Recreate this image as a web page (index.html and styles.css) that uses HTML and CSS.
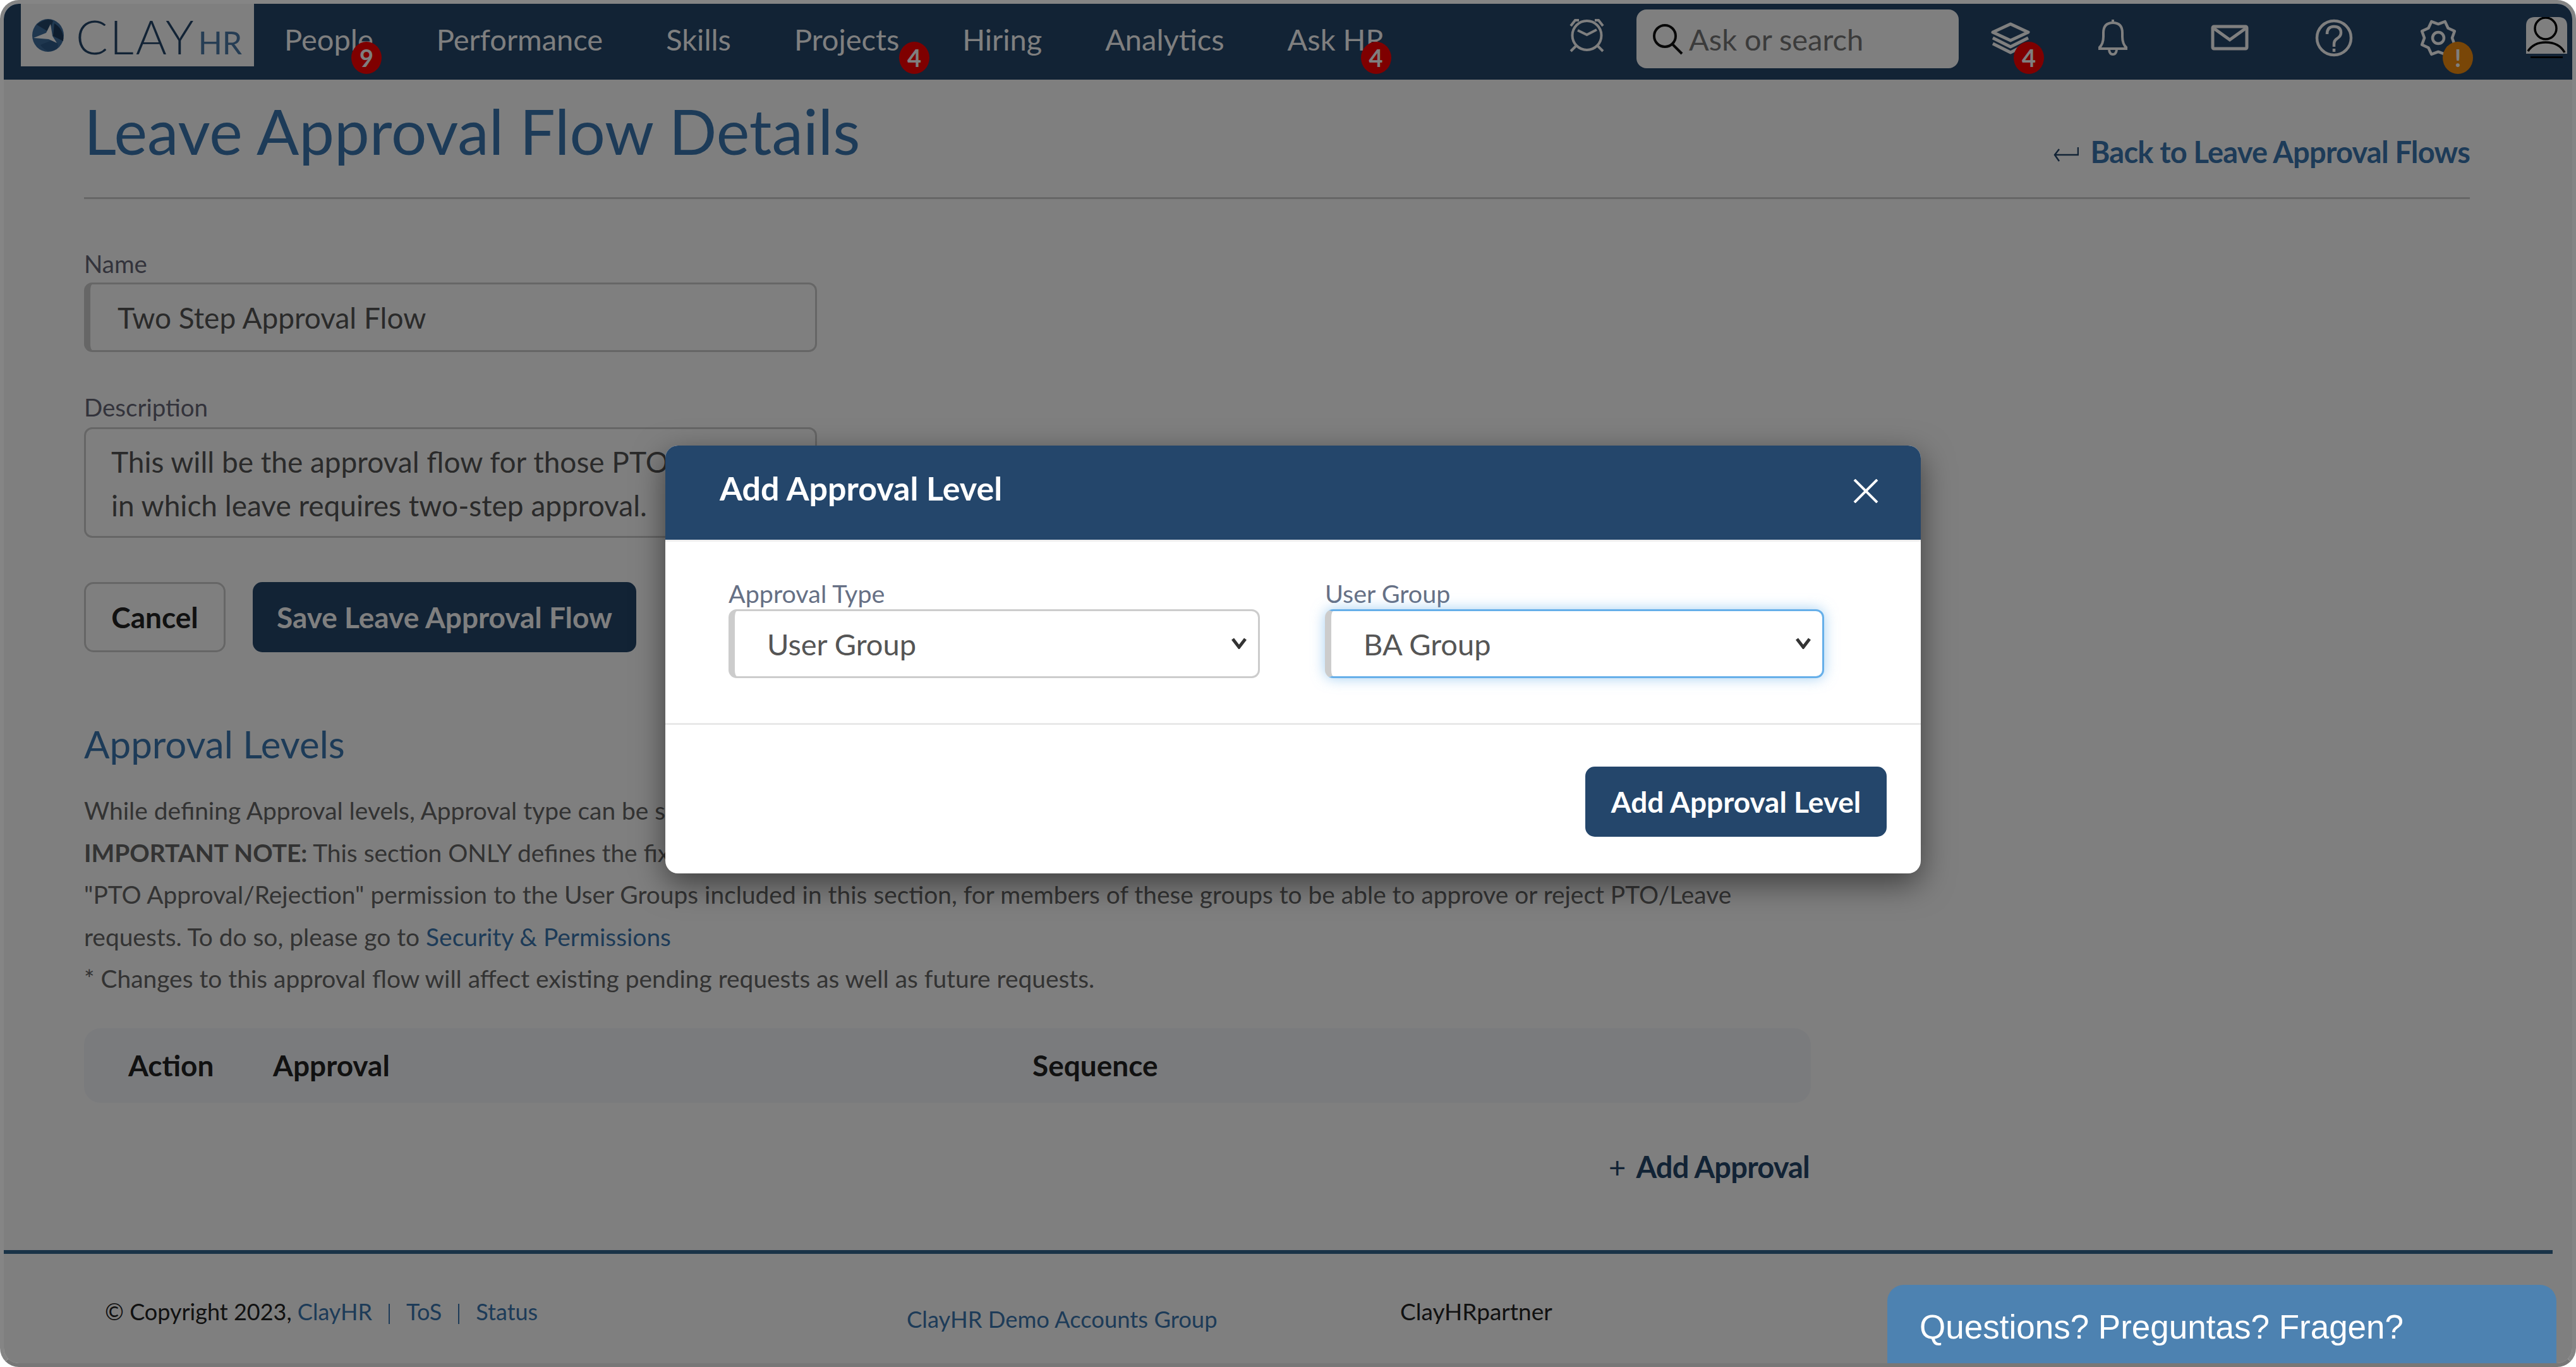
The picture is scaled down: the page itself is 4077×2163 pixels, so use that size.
FILE: index.html
```html
<!DOCTYPE html>
<html lang="en">
<head>
  <meta charset="UTF-8">
  <title>Leave Approval Flow Details</title>
  <link rel="stylesheet" href="styles.css">
</head>
<body>
<div class="window">

  <!-- Top bar -->
  <header class="topbar">
    <a class="logo">
      <svg class="logo-mark" viewBox="0 0 52 54">
        <ellipse cx="26" cy="27" rx="25" ry="26" fill="#3f6f9f"/>
        <path d="M8 10 Q24 -2 34 4 L28 22 Z" fill="#24466b"/>
        <path d="M36 8 Q52 18 50 36 L34 28 Z" fill="#1c3a5c"/>
        <path d="M14 42 L34 34 Q46 40 40 48 Q24 58 14 42 Z" fill="#2f5c8c"/>
        <path d="M30 9 L33 28 L40 39 L27 33 L3 31 L23 23 Z" fill="#fff"/>
      </svg>
      <span class="logo-clay">CLAY</span><span class="logo-hr">HR</span>
    </a>
    <nav class="nav">
      <a class="nav-item">People<span class="badge badge-people">9</span></a>
      <a class="nav-item">Performance</a>
      <a class="nav-item">Skills</a>
      <a class="nav-item">Projects<span class="badge badge-projects">4</span></a>
      <a class="nav-item">Hiring</a>
      <a class="nav-item">Analytics</a>
      <a class="nav-item">Ask HR<span class="badge badge-ask">4</span></a>
    </nav>
    <div class="tools">
      <svg class="icon-alarm" viewBox="0 0 57 54" fill="none" stroke="#fff" stroke-width="4">
        <circle cx="28.5" cy="27" r="23"/>
        <path d="M14 19 L28.500 26 L44 18"/>
        <path d="M3 12 L10 3 H16 M54 12 L47 3 H41 M3 52 L11 44 M54 52 L46 44"/>
      </svg>
      <div class="search">
        <svg class="search-icon" viewBox="0 0 50 50" fill="none" stroke="#111" stroke-width="4">
          <circle cx="20" cy="20" r="17"/>
          <path d="M32 33 L47 48"/>
        </svg>
        <span class="search-text">Ask or search</span>
      </div>
      <div class="tool tool-layers">
        <svg viewBox="0 0 64 64" fill="none" stroke="#fff" stroke-width="5" stroke-linejoin="round">
          <path d="M32 14 L60 27 L32 40 L4 27 Z"/>
          <path d="M4 36 L32 50 L60 36"/>
          <path d="M4 45 L32 59 L60 45"/>
        </svg>
        <span class="badge badge-layers">4</span>
      </div>
      <div class="tool tool-bell">
        <svg viewBox="0 0 60 60" fill="none" stroke="#fff" stroke-width="4" stroke-linejoin="round">
          <path d="M30 1 V6"/>
          <path d="M8 46 Q15 40 15 28 V22 Q15 6 30 6 Q45 6 45 22 V28 Q45 40 52 46"/>
          <path d="M7 47 H53"/>
          <path d="M24 49 Q25 56 30 56 Q35 56 36 49"/>
        </svg>
      </div>
      <div class="tool tool-mail">
        <svg viewBox="0 0 60 60" fill="none" stroke="#fff" stroke-width="5">
          <rect x="3" y="13" width="54" height="35" rx="2"/>
          <path d="M5 16 L30 34 L55 16"/>
        </svg>
      </div>
      <div class="tool">
        <svg viewBox="0 0 60 60" fill="none" stroke="#fff" stroke-width="4.500">
          <circle cx="30" cy="30" r="27"/>
          <path d="M19 24 Q19 12 30 12 Q41 12 41 22 Q41 27 35 31 Q30 34 30 40 V44"/>
          <path d="M30 47 V52"/>
        </svg>
      </div>
      <div class="tool">
        <svg viewBox="0 0 60 60" fill="none" stroke="#fff" stroke-width="4.500" stroke-linejoin="round">
          <g transform="rotate(22.5 30 30)">
            <path d="M58 30 L50.300 38.400 L49.800 49.800 L38.400 50.300 L30 58 L21.600 50.300 L10.200 49.800 L9.700 38.400 L2 30 L9.700 21.600 L10.200 10.200 L21.600 9.700 L30 2 L38.400 9.700 L49.800 10.200 L50.300 21.600 Z"/>
          </g>
          <circle cx="30" cy="30" r="9"/>
        </svg>
        <span class="badge badge-gear">!</span>
      </div>
      <div class="tool tool-user">
        <svg viewBox="0 0 65 65" stroke="#000" stroke-width="3.500">
          <path d="M14 0 H51 Q65 0 65 14 V58 H0 V14 Q0 0 14 0 Z" fill="#fff" stroke="none"/>
          <circle cx="31" cy="18" r="17" fill="#fff"/>
          <path d="M3 54 Q12 40 31 40 Q52 40 61 56 M7 64 H58" fill="none"/>
        </svg>
      </div>
    </div>
  </header>

  <!-- Page content -->
  <main class="content">
    <div class="title-bar">
      <h1 class="title">Leave Approval Flow Details</h1>
      <a class="back-link">
        <svg class="back-arrow" viewBox="0 0 40 26" fill="none" stroke="#24466b" stroke-width="2.500">
          <path d="M39 1 V13 H2 M9 4 L2 13 L9 23"/>
        </svg>
        Back to Leave Approval Flows
      </a>
    </div>

    <div class="form-group name-group">
      <label class="field-label">Name</label>
      <input class="field-input" type="text" value="Two Step Approval Flow">
    </div>
    <div class="form-group desc-group">
      <label class="field-label">Description</label>
      <textarea class="field-area" rows="2">This will be the approval flow for those PTO
in which leave requires two-step approval.</textarea>
    </div>

    <div class="actions">
      <button class="btn btn-cancel">Cancel</button>
      <button class="btn btn-save">Save Leave Approval Flow</button>
    </div>

    <h2 class="section-title">Approval Levels</h2>
    <p class="section-text">
      While defining Approval levels, Approval type can be set to a User Group or a Manager.<br>
      <strong>IMPORTANT NOTE:</strong> This section ONLY defines the fixed approval order. You also need to grant<br>
      "PTO Approval/Rejection" permission to the User Groups included in this section, for members of these groups to be able to approve or reject PTO/Leave<br>
      requests. To do so, please go to <a class="inline-link">Security &amp; Permissions</a><br>
      * Changes to this approval flow will affect existing pending requests as well as future requests.
    </p>

    <div class="table-head">
      <span>Action</span>
      <span>Approval</span>
      <span>Sequence</span>
    </div>
    <div class="add-row">
      <a class="add-link"><span class="add-plus">+</span>Add Approval</a>
    </div>
  </main>

  <footer class="footer">
    <div class="copyright">© Copyright 2023, <a class="footer-link">ClayHR</a><span class="sep"></span><a class="footer-link">ToS</a><span class="sep"></span><a class="footer-link">Status</a></div>
    <a class="footer-link demo-group">ClayHR Demo Accounts Group</a>
    <div class="partner">ClayHRpartner</div>
  </footer>

  <!-- Modal -->
  <div class="backdrop"></div>
  <div class="modal">
    <div class="modal-head">
      <h3 class="modal-title">Add Approval Level</h3>
      <svg class="modal-close" viewBox="0 0 40 38" fill="none" stroke="#fff" stroke-width="4">
        <path d="M2 1 L38 37 M38 1 L2 37"/>
      </svg>
    </div>
    <div class="modal-body">
      <div class="modal-field">
        <label class="modal-label">Approval Type</label>
        <div class="select-wrap">
          <select class="modal-select"><option>User Group</option></select>
          <svg class="select-arrow" viewBox="0 0 26 18" fill="none" stroke="#333" stroke-width="5"><path d="M3 2 L13 15 L23 2"/></svg>
        </div>
      </div>
      <div class="modal-field">
        <label class="modal-label">User Group</label>
        <div class="select-wrap">
          <select class="modal-select is-focus"><option>BA Group</option></select>
          <svg class="select-arrow" viewBox="0 0 26 18" fill="none" stroke="#333" stroke-width="5"><path d="M3 2 L13 15 L23 2"/></svg>
        </div>
      </div>
    </div>
    <div class="modal-foot">
      <button class="btn btn-add">Add Approval Level</button>
    </div>
  </div>

  <div class="help-widget">Questions? Preguntas? Fragen?</div>
</div>
</body>
</html>
```

FILE: styles.css
```css
* {
  box-sizing: border-box;
}

body {
  margin: 0;
  background: #fff;
  font-family: 'Lato', sans-serif;
  color: #333;
}

.window {
  position: relative;
  height: 2163px;
  overflow: hidden;
  background: #fff;
  border: 6px solid #858585;
  border-bottom-color: #777;
  border-radius: 30px;
}

/* Top bar */
.topbar {
  display: flex;
  align-items: center;
  height: 120px;
  padding: 0 8px 0 27px;
  background: #24466b;
}

.logo {
  display: flex;
  align-items: baseline;
  flex: none;
  width: 369px;
  height: 99px;
  margin-top: -21px;
  padding: 0 0 0 17px;
  background: #fff;
  line-height: 102px;
}

.logo-mark {
  align-self: center;
  width: 52px;
  height: 54px;
  margin-right: 18px;
}

.logo-clay {
  font-size: 75px;
  font-weight: 300;
  letter-spacing: 3px;
  color: #24466b;
}

.logo-hr {
  margin-left: 4px;
  font-size: 50px;
  font-weight: 400;
  color: #4d7ba8;
}

.nav {
  display: flex;
  gap: 100px;
  margin-left: 48px;
}

.nav-item {
  position: relative;
  font-size: 47px;
  line-height: 60px;
  margin-top: -8px;
  color: #fff;
}

.badge {
  position: absolute;
  top: 34px;
  width: 48px;
  height: 51px;
  border-radius: 50%;
  background: #ff0000;
  color: #fff;
  font-size: 38px;
  font-weight: 700;
  line-height: 51px;
  text-align: center;
}

.badge-people { left: 106px; }
.badge-projects { left: 166px; }
.badge-ask { left: 116px; }
.badge-layers { left: 37px; top: 42px; }
.badge-gear { left: 37px; top: 36px; background: #f28c0f; }

.tools {
  display: flex;
  align-items: flex-start;
  margin-left: auto;
  height: 120px;
  padding-top: 9px;
}

.icon-alarm {
  width: 57px;
  height: 54px;
  margin: 14px 50px 0 0;
}

.search {
  display: flex;
  align-items: center;
  width: 510px;
  height: 93px;
  padding-left: 25px;
  border-radius: 16px;
  background: #fff;
}

.search-icon {
  width: 50px;
  height: 50px;
  margin-right: 8px;
}

.search-text {
  font-size: 47px;
  color: #777;
}

.tool {
  position: relative;
  width: 60px;
  height: 60px;
  margin: 15px 0 0 105px;
}

.tool svg {
  display: block;
  width: 100%;
  height: 100%;
}

.tool-layers {
  width: 64px;
  height: 64px;
  margin: 9px 0 0 50px;
}

.tool-bell {
  margin: 15px 0 0 100px;
}

.tool-mail {
  margin: 14px 0 0 125px;
}

.tool-user {
  width: 65px;
  height: 65px;
  margin: 12px 0 0 109px;
}

/* Page content */
.content {
  padding: 0 0 0 127px;
}

.title-bar {
  display: flex;
  justify-content: space-between;
  width: 3776px;
  height: 189px;
  padding-top: 21px;
  border-bottom: 3px solid #ccc;
}

.title {
  margin: 0;
  font-size: 99.500px;
  font-weight: 400;
  line-height: 120px;
  color: #3a77b0;
}

.back-link {
  display: flex;
  align-items: center;
  height: 60px;
  margin-top: 63px;
  font-size: 47px;
  font-weight: 700;
  letter-spacing: -0.800px;
  color: #3a77b0;
}

.back-arrow {
  width: 40px;
  height: 26px;
  margin: 10px 19px 0 0;
}

.form-group {
  width: 1160px;
}

.name-group {
  margin-top: 80px;
}

.desc-group {
  margin-top: 65px;
}

.field-label {
  display: block;
  font-size: 38.500px;
  line-height: 44px;
  color: #667;
}

.field-input {
  display: block;
  width: 100%;
  height: 110px;
  margin-top: 8px;
  padding: 0 0 0 43px;
  border: 3px solid #ccc;
  border-left-width: 10px;
  border-radius: 13px;
  background: #fff;
  font-family: 'Lato', sans-serif;
  font-size: 46px;
  color: #555;
}

.field-area {
  display: block;
  width: 100%;
  height: 175px;
  margin-top: 10px;
  padding: 17px 40px;
  border: 3px solid #ccc;
  border-radius: 13px;
  background: #fff;
  font-family: 'Lato', sans-serif;
  font-size: 46px;
  line-height: 69px;
  color: #555;
  overflow: hidden;
  resize: none;
}

.actions {
  display: flex;
  gap: 43px;
  margin-top: 70px;
}

.btn {
  height: 111px;
  border-radius: 15px;
  font-family: 'Lato', sans-serif;
  font-size: 46px;
  font-weight: 700;
}

.btn-cancel {
  width: 224px;
  border: 3px solid #ccc;
  background: #fff;
  color: #222;
}

.btn-save {
  width: 607px;
  border: 0;
  background: #24466b;
  color: #fff;
}

.section-title {
  margin: 111px 0 0;
  font-size: 60px;
  font-weight: 400;
  line-height: 68px;
  color: #3a77b0;
}

.section-text {
  margin: 38px 0 0;
  font-size: 38.900px;
  line-height: 66.500px;
  color: #666;
}

.section-text strong {
  color: #666;
}

.inline-link {
  color: #3a77b0;
}

.table-head {
  display: grid;
  grid-template-columns: 229px 1202px auto;
  align-items: center;
  width: 2733px;
  height: 118px;
  margin-top: 45px;
  padding-left: 70px;
  border-radius: 26px;
  background: #f5f7fb;
  font-size: 46px;
  font-weight: 700;
  color: #222;
}

.add-row {
  display: flex;
  justify-content: flex-end;
  width: 2731px;
  margin-top: 71px;
}

.add-link {
  font-size: 47px;
  font-weight: 700;
  line-height: 60px;
  letter-spacing: -0.800px;
  color: #24466b;
}

.add-plus {
  margin-right: 17px;
  font-weight: 400;
}

/* Footer */
.footer {
  display: grid;
  grid-template-columns: 1269px 781px auto;
  width: 4034px;
  height: 180px;
  margin-top: 102px;
  padding: 69px 0 0 160px;
  border-top: 6px solid #35668f;
  font-size: 36.400px;
  line-height: 44px;
  color: #222;
}

.copyright {
  font-size: 36px;
}

.footer-link {
  color: #3a77b0;
}

.demo-group {
  margin-top: 12px;
}

.partner {
  font-size: 37px;
}

.sep {
  display: inline-block;
  width: 2px;
  height: 32px;
  margin: 0 26px;
  vertical-align: -6px;
  background: #3a77b0;
}

/* Modal */
.backdrop {
  position: absolute;
  inset: 0;
  background: rgba(0, 0, 0, 0.5);
}

.modal {
  position: absolute;
  top: 699px;
  left: 1047px;
  display: flex;
  flex-direction: column;
  width: 1987px;
  height: 677px;
  overflow: hidden;
  border-radius: 20px;
  background: #fff;
  box-shadow: 0 16px 50px rgba(0, 0, 0, 0.5);
}

.modal-head {
  display: flex;
  justify-content: space-between;
  align-items: center;
  height: 152px;
  padding: 0 67px 0 86px;
  border-bottom: 3px solid #eee;
  background: #24466b;
}

.modal-title {
  margin: 0 0 16px;
  font-size: 52px;
  font-weight: 700;
  color: #fff;
}

.modal-close {
  width: 40px;
  height: 38px;
  margin-bottom: 6px;
}

.modal-body {
  display: grid;
  grid-template-columns: 841px 790px;
  gap: 103px;
  height: 290px;
  padding: 60px 0 0 100px;
  border-bottom: 3px solid #e8e8e8;
}

.modal-label {
  display: block;
  font-size: 39.500px;
  line-height: 44px;
  color: #667085;
}

.select-wrap {
  position: relative;
  margin-top: 3px;
}

.modal-select {
  display: block;
  width: 100%;
  height: 109px;
  padding-left: 51px;
  border: 3px solid #ccc;
  border-left-width: 10px;
  border-radius: 13px;
  background: #fff;
  font-family: 'Lato', sans-serif;
  font-size: 47px;
  color: #555;
  appearance: none;
}

.modal-select.is-focus {
  border-color: #66afe9 #66afe9 #66afe9 #ccc;
  box-shadow: 0 0 21px rgba(102, 175, 233, 0.6);
}

.select-arrow {
  position: absolute;
  top: 45px;
  right: 20px;
  width: 26px;
  height: 18px;
}

.modal-foot {
  display: flex;
  justify-content: flex-end;
  padding: 66px 54px 0 0;
}

.btn-add {
  width: 477px;
  border: 0;
  background: #24466b;
  color: #fff;
}

.help-widget {
  position: absolute;
  top: 2027px;
  left: 2981px;
  width: 1059px;
  height: 124px;
  padding: 36px 0 0 51px;
  border-radius: 26px 26px 0 0;
  background: #4d82b1;
  font-family: 'Liberation Sans', Arial, sans-serif;
  font-size: 53px;
  line-height: 62px;
  color: #fff;
}
```
